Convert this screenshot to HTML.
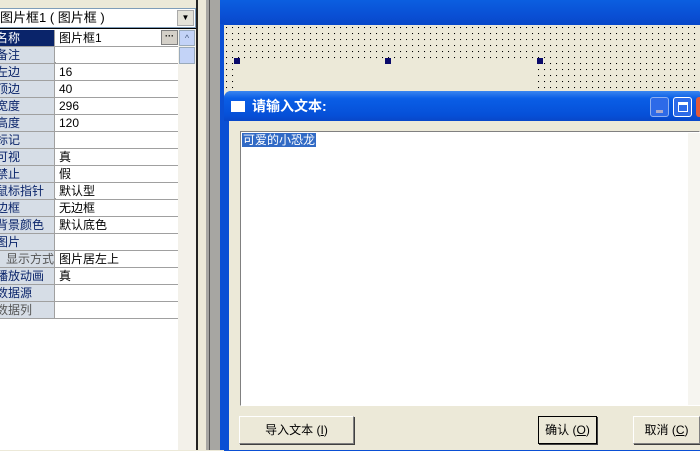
<!DOCTYPE html>
<html><head><meta charset="utf-8"><style>
*{margin:0;padding:0;box-sizing:border-box}
body{width:700px;height:450px;overflow:hidden;position:relative;background:#ece9d8;font-family:"Liberation Sans","Noto Sans CJK SC","WenQuanYi Zen Hei",sans-serif;font-size:12px}
.abs{position:absolute}
.row{position:absolute;left:0;width:178px;height:17px;border-bottom:1px solid #a0a0a0}
.row .l{position:absolute;left:0;top:0;width:55px;height:16px;background:#d6dde6;color:#0a246a;line-height:16px;white-space:nowrap;overflow:hidden;text-indent:-4px;border-right:1px solid #a0a0a0}
.row .v{position:absolute;left:56px;top:0;width:122px;height:16px;background:#fff;line-height:16px;padding-left:3px;color:#000}
.dot{background-color:#ece9d8;background-image:linear-gradient(#000,#000);background-size:1px 1px;background-repeat:no-repeat}
.dot{background-image:radial-gradient(circle at 0.5px 0.5px,#000 0.7px,transparent 0.8px);background-size:6px 6px;background-repeat:repeat;background-position:2px 2px}
.h{position:absolute;width:6px;height:6px;background:#0a0a6a}
.btn{position:absolute;height:28px;background:#ece9d8;border:1px solid;border-color:#fff #808080 #808080 #fff;box-shadow:1px 1px 0 #404040;text-align:center;line-height:26px;font-size:12px}
</style></head><body>
<div class="abs" style="left:0;top:0;width:198px;height:450px;background:#fff"></div>
<div class="abs" style="left:0;top:0;width:198px;height:8px;background:#ece9d8"></div>
<div class="abs" style="left:0;top:8px;width:196px;height:20px;background:#fff;border:1px solid #7f9db9;border-left:none;font-size:13px;line-height:18px">图片框1 ( 图片框 )</div>
<div class="abs" style="left:177px;top:10px;width:17px;height:16px;background:#e4e2d8;border:1px solid #aaa;font-size:8px;text-align:center;line-height:14px">▼</div>
<div class="abs" style="left:0;top:28px;width:196px;height:1px;background:#000"></div>
<div class="abs" style="left:178px;top:29px;width:18px;height:421px;background:#f3f1ea"></div>
<div class="abs" style="left:179px;top:30px;width:16px;height:16px;background:#c3d3f7;border:1px solid #9ab;font-size:9px;text-align:center;line-height:14px;color:#4d6185">^</div>
<div class="abs" style="left:179px;top:47px;width:16px;height:17px;background:#c3d3f7;border:1px solid #9ab"></div>
<div class="row" style="top:30px"><div class="l" style="background:#0a246a;color:#fff">名称</div><div class="v">图片框1</div><div class="abs" style="left:161px;top:0;width:17px;height:15px;background:#d4d0c8;border:1px solid #808080;font-size:9px;text-align:center;line-height:10px;font-weight:bold">···</div></div>
<div class="row" style="top:47px;border-bottom:2px solid #a0a0a0"><div class="l">备注</div><div class="v"></div></div>
<div class="row" style="top:64px"><div class="l">左边</div><div class="v">16</div></div>
<div class="row" style="top:81px"><div class="l">顶边</div><div class="v">40</div></div>
<div class="row" style="top:98px"><div class="l">宽度</div><div class="v">296</div></div>
<div class="row" style="top:115px"><div class="l">高度</div><div class="v">120</div></div>
<div class="row" style="top:132px"><div class="l">标记</div><div class="v"></div></div>
<div class="row" style="top:149px"><div class="l">可视</div><div class="v">真</div></div>
<div class="row" style="top:166px"><div class="l">禁止</div><div class="v">假</div></div>
<div class="row" style="top:183px;border-bottom:2px solid #a0a0a0"><div class="l">鼠标指针</div><div class="v">默认型</div></div>
<div class="row" style="top:200px"><div class="l">边框</div><div class="v">无边框</div></div>
<div class="row" style="top:217px"><div class="l">背景颜色</div><div class="v">默认底色</div></div>
<div class="row" style="top:234px"><div class="l">图片</div><div class="v"></div></div>
<div class="row" style="top:251px"><div class="l" style="text-indent:6px;color:#555">显示方式</div><div class="v">图片居左上</div></div>
<div class="row" style="top:268px"><div class="l">播放动画</div><div class="v">真</div></div>
<div class="row" style="top:285px"><div class="l">数据源</div><div class="v"></div></div>
<div class="row" style="top:302px"><div class="l" style="color:#555">数据列</div><div class="v"></div></div>
<div class="abs" style="left:196px;top:0;width:2px;height:450px;background:#222"></div>
<div class="abs" style="left:198px;top:0;width:8px;height:450px;background:#ece9d8"></div>
<div class="abs" style="left:206px;top:0;width:16px;height:450px;background:#a7a6a2"></div>
<div class="abs" style="left:209px;top:0;width:1px;height:450px;background:#555"></div>
<div class="abs" style="left:220px;top:0;width:480px;height:26px;background:linear-gradient(#0b5fe0,#0a4fd4 60%,#0847c8)"></div>
<div class="abs" style="left:220px;top:24px;width:4px;height:426px;background:#0a4fd4"></div>
<div class="abs dot" style="left:224px;top:25px;width:476px;height:68px"></div>
<div class="abs" style="left:238px;top:60px;width:296px;height:33px;background:#ece9d8"></div>
<div class="h" style="left:234px;top:58px"></div>
<div class="h" style="left:385px;top:58px"></div>
<div class="h" style="left:537px;top:58px"></div>
<div class="abs" style="left:224px;top:91px;width:480px;height:360px;background:#0a4fd4;border-radius:7px 7px 0 0"></div>
<div class="abs" style="left:224px;top:91px;width:480px;height:30px;background:linear-gradient(#3a86f0,#0a5ee6 25%,#0650d8 80%,#0847c8);border-radius:7px 7px 0 0"></div>
<div class="abs" style="left:231px;top:101px;width:14px;height:11px;background:#fff"></div>
<div class="abs" style="left:252px;top:97px;color:#fff;font-weight:bold;font-size:14px;line-height:18px">请输入文本:</div>
<div class="abs" style="left:650px;top:97px;width:19px;height:20px;background:#2d6ae8;border:1px solid #8fb0f0;border-radius:3px"><div class="abs" style="left:5px;top:12px;width:7px;height:3px;background:#aac"></div></div>
<div class="abs" style="left:673px;top:97px;width:19px;height:20px;background:#2d6ae8;border:1px solid #fff;border-radius:3px"><div class="abs" style="left:4px;top:4px;width:10px;height:10px;border:1px solid #fff;border-top-width:3px"></div></div>
<div class="abs" style="left:696px;top:97px;width:10px;height:20px;background:#e0593a;border-radius:3px 0 0 3px"></div>
<div class="abs" style="left:229px;top:121px;width:471px;height:329px;background:#ece9d8"></div>
<div class="abs" style="left:240px;top:131px;width:460px;height:275px;background:#fff;border:1px solid;border-color:#808080 #fff #fff #808080"></div>
<div class="abs" style="left:688px;top:133px;width:12px;height:272px;background:#f6f5f0"></div>
<div class="abs" style="left:242px;top:133px;background:#316ac5;color:#fff;font-size:12px;line-height:14px;padding:0 1px">可爱的小恐龙</div>
<div class="btn" style="left:239px;top:416px;width:115px">导入文本 (<u>I</u>)</div>
<div class="btn" style="left:538px;top:416px;width:59px;border:1px solid #000">确认 (<u>O</u>)</div>
<div class="btn" style="left:633px;top:416px;width:67px">取消 (<u>C</u>)</div>
</body></html>
